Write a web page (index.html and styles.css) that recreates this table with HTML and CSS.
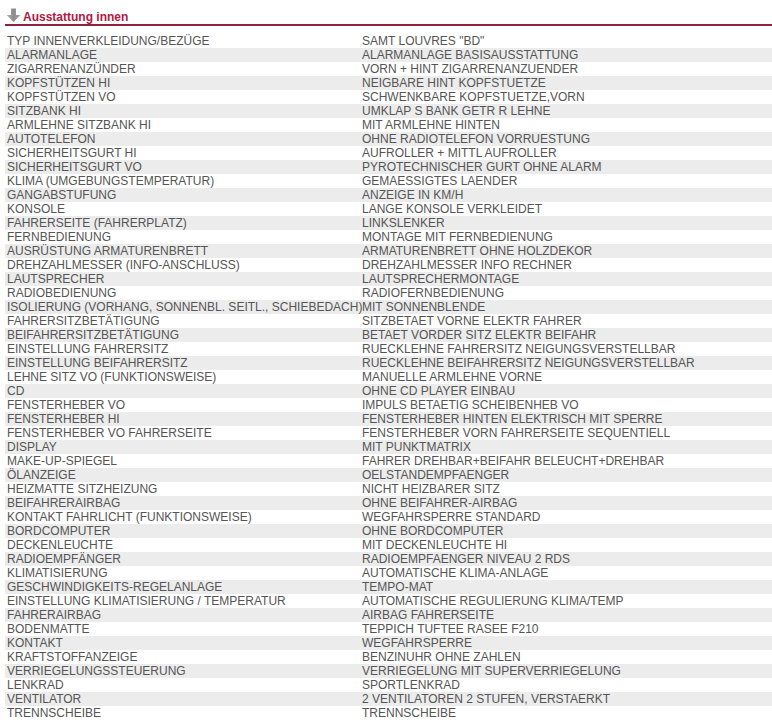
FILE: index.html
```html
<!DOCTYPE html>
<html lang="de">
<head>
<meta charset="utf-8">
<title>Ausstattung innen</title>
<link rel="stylesheet" href="styles.css">
</head>
<body>
<div class="section">
  <div class="section-head">
    <svg class="arrow" width="15" height="15" viewBox="0 0 15 15" aria-hidden="true">
      <defs>
        <linearGradient id="g" x1="0" y1="0" x2="1" y2="0">
          <stop offset="0" stop-color="#b8b8b8"/>
          <stop offset="0.5" stop-color="#8c8c8c"/>
          <stop offset="1" stop-color="#a6a6a6"/>
        </linearGradient>
      </defs>
      <path d="M5 0.5 H10 V7 H14.5 L7.5 14 L0.5 7 H5 Z" fill="url(#g)"/>
    </svg>
    <span class="title">Ausstattung innen</span>
  </div>
  <div class="table">
    <div class="row"><div class="k">TYP INNENVERKLEIDUNG/BEZÜGE</div><div class="v">SAMT LOUVRES "BD"</div></div>
    <div class="row"><div class="k">ALARMANLAGE</div><div class="v">ALARMANLAGE BASISAUSSTATTUNG</div></div>
    <div class="row"><div class="k">ZIGARRENANZÜNDER</div><div class="v">VORN + HINT ZIGARRENANZUENDER</div></div>
    <div class="row"><div class="k">KOPFSTÜTZEN HI</div><div class="v">NEIGBARE HINT KOPFSTUETZE</div></div>
    <div class="row"><div class="k">KOPFSTÜTZEN VO</div><div class="v">SCHWENKBARE KOPFSTUETZE,VORN</div></div>
    <div class="row"><div class="k">SITZBANK HI</div><div class="v">UMKLAP S BANK GETR R LEHNE</div></div>
    <div class="row"><div class="k">ARMLEHNE SITZBANK HI</div><div class="v">MIT ARMLEHNE HINTEN</div></div>
    <div class="row"><div class="k">AUTOTELEFON</div><div class="v">OHNE RADIOTELEFON VORRUESTUNG</div></div>
    <div class="row"><div class="k">SICHERHEITSGURT HI</div><div class="v">AUFROLLER + MITTL AUFROLLER</div></div>
    <div class="row"><div class="k">SICHERHEITSGURT VO</div><div class="v">PYROTECHNISCHER GURT OHNE ALARM</div></div>
    <div class="row"><div class="k">KLIMA (UMGEBUNGSTEMPERATUR)</div><div class="v">GEMAESSIGTES LAENDER</div></div>
    <div class="row"><div class="k">GANGABSTUFUNG</div><div class="v">ANZEIGE IN KM/H</div></div>
    <div class="row"><div class="k">KONSOLE</div><div class="v">LANGE KONSOLE VERKLEIDET</div></div>
    <div class="row"><div class="k">FAHRERSEITE (FAHRERPLATZ)</div><div class="v">LINKSLENKER</div></div>
    <div class="row"><div class="k">FERNBEDIENUNG</div><div class="v">MONTAGE MIT FERNBEDIENUNG</div></div>
    <div class="row"><div class="k">AUSRÜSTUNG ARMATURENBRETT</div><div class="v">ARMATURENBRETT OHNE HOLZDEKOR</div></div>
    <div class="row"><div class="k">DREHZAHLMESSER (INFO-ANSCHLUSS)</div><div class="v">DREHZAHLMESSER INFO RECHNER</div></div>
    <div class="row"><div class="k">LAUTSPRECHER</div><div class="v">LAUTSPRECHERMONTAGE</div></div>
    <div class="row"><div class="k">RADIOBEDIENUNG</div><div class="v">RADIOFERNBEDIENUNG</div></div>
    <div class="row"><div class="k">ISOLIERUNG (VORHANG, SONNENBL. SEITL., SCHIEBEDACH)</div><div class="v">MIT SONNENBLENDE</div></div>
    <div class="row"><div class="k">FAHRERSITZBETÄTIGUNG</div><div class="v">SITZBETAET VORNE ELEKTR FAHRER</div></div>
    <div class="row"><div class="k">BEIFAHRERSITZBETÄTIGUNG</div><div class="v">BETAET VORDER SITZ ELEKTR BEIFAHR</div></div>
    <div class="row"><div class="k">EINSTELLUNG FAHRERSITZ</div><div class="v">RUECKLEHNE FAHRERSITZ NEIGUNGSVERSTELLBAR</div></div>
    <div class="row"><div class="k">EINSTELLUNG BEIFAHRERSITZ</div><div class="v">RUECKLEHNE BEIFAHRERSITZ NEIGUNGSVERSTELLBAR</div></div>
    <div class="row"><div class="k">LEHNE SITZ VO (FUNKTIONSWEISE)</div><div class="v">MANUELLE ARMLEHNE VORNE</div></div>
    <div class="row"><div class="k">CD</div><div class="v">OHNE CD PLAYER EINBAU</div></div>
    <div class="row"><div class="k">FENSTERHEBER VO</div><div class="v">IMPULS BETAETIG SCHEIBENHEB VO</div></div>
    <div class="row"><div class="k">FENSTERHEBER HI</div><div class="v">FENSTERHEBER HINTEN ELEKTRISCH MIT SPERRE</div></div>
    <div class="row"><div class="k">FENSTERHEBER VO FAHRERSEITE</div><div class="v">FENSTERHEBER VORN FAHRERSEITE SEQUENTIELL</div></div>
    <div class="row"><div class="k">DISPLAY</div><div class="v">MIT PUNKTMATRIX</div></div>
    <div class="row"><div class="k">MAKE-UP-SPIEGEL</div><div class="v">FAHRER DREHBAR+BEIFAHR BELEUCHT+DREHBAR</div></div>
    <div class="row"><div class="k">ÖLANZEIGE</div><div class="v">OELSTANDEMPFAENGER</div></div>
    <div class="row"><div class="k">HEIZMATTE SITZHEIZUNG</div><div class="v">NICHT HEIZBARER SITZ</div></div>
    <div class="row"><div class="k">BEIFAHRERAIRBAG</div><div class="v">OHNE BEIFAHRER-AIRBAG</div></div>
    <div class="row"><div class="k">KONTAKT FAHRLICHT (FUNKTIONSWEISE)</div><div class="v">WEGFAHRSPERRE STANDARD</div></div>
    <div class="row"><div class="k">BORDCOMPUTER</div><div class="v">OHNE BORDCOMPUTER</div></div>
    <div class="row"><div class="k">DECKENLEUCHTE</div><div class="v">MIT DECKENLEUCHTE HI</div></div>
    <div class="row"><div class="k">RADIOEMPFÄNGER</div><div class="v">RADIOEMPFAENGER NIVEAU 2 RDS</div></div>
    <div class="row"><div class="k">KLIMATISIERUNG</div><div class="v">AUTOMATISCHE KLIMA-ANLAGE</div></div>
    <div class="row"><div class="k">GESCHWINDIGKEITS-REGELANLAGE</div><div class="v">TEMPO-MAT</div></div>
    <div class="row"><div class="k">EINSTELLUNG KLIMATISIERUNG / TEMPERATUR</div><div class="v">AUTOMATISCHE REGULIERUNG KLIMA/TEMP</div></div>
    <div class="row"><div class="k">FAHRERAIRBAG</div><div class="v">AIRBAG FAHRERSEITE</div></div>
    <div class="row"><div class="k">BODENMATTE</div><div class="v">TEPPICH TUFTEE RASEE F210</div></div>
    <div class="row"><div class="k">KONTAKT</div><div class="v">WEGFAHRSPERRE</div></div>
    <div class="row"><div class="k">KRAFTSTOFFANZEIGE</div><div class="v">BENZINUHR OHNE ZAHLEN</div></div>
    <div class="row"><div class="k">VERRIEGELUNGSSTEUERUNG</div><div class="v">VERRIEGELUNG MIT SUPERVERRIEGELUNG</div></div>
    <div class="row"><div class="k">LENKRAD</div><div class="v">SPORTLENKRAD</div></div>
    <div class="row"><div class="k">VENTILATOR</div><div class="v">2 VENTILATOREN 2 STUFEN, VERSTAERKT</div></div>
    <div class="row"><div class="k">TRENNSCHEIBE</div><div class="v">TRENNSCHEIBE</div></div>
  </div>
</div>
</body>
</html>
```
FILE: styles.css
```css
html, body {
  margin: 0;
  padding: 0;
  background: #ffffff;
}
body {
  font-family: "Liberation Sans", Arial, sans-serif;
  font-size: 12px;
  color: #555555;
}
.section {
  padding: 10px 0 0 5px;
}
.section-head {
  display: flex;
  align-items: flex-end;
  height: 14px;
  line-height: 14px;
  border-bottom: 2px solid #8e2340;
}
.arrow {
  display: block;
  margin: 0 2px 0 1px;
  position: relative;
  top: -1px;
}
.title {
  font-weight: bold;
  color: #b3173f;
}
.table {
  margin-top: 8px;
}
.row {
  display: grid;
  grid-template-columns: 355px 1fr;
  line-height: 14px;
  height: 14px;
}
.row:nth-child(even) {
  background: #ececec;
}
.k, .v {
  padding-left: 2px;
  white-space: nowrap;
}
```
